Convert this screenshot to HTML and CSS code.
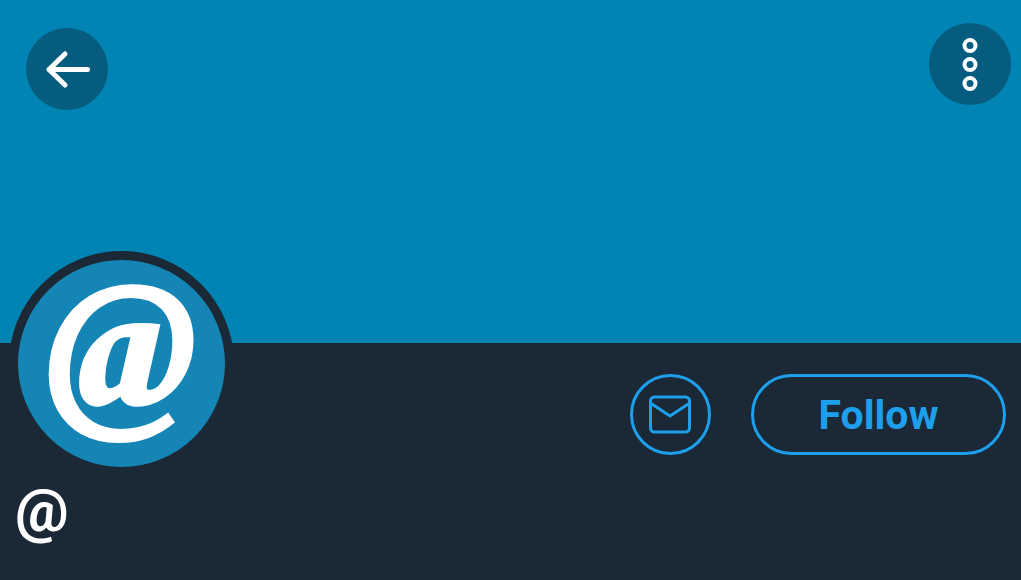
FILE: index.html
```
<!DOCTYPE html>
<html lang="en">
<head>
  <meta charset="UTF-8" />
  <meta name="viewport" content="width=device-width, initial-scale=1.0"/>
  <title>@</title>
  <link rel="stylesheet" href="styles.css">
</head>
<body>
  <header class="banner">
    <button class="round-btn back" type="button" aria-label="Back">
      <svg width="82" height="82" viewBox="0 0 82 82" fill="none" stroke="#fff" stroke-width="5" stroke-linecap="round" stroke-linejoin="round">
        <path d="M61.500 41.500H23M39 26L23 41.500L39 57"/>
      </svg>
    </button>
    <button class="round-btn" type="button" aria-label="More options">
      <svg width="82" height="82" viewBox="0 0 82 82" fill="none" stroke="#fff" stroke-width="4">
        <circle cx="41" cy="22.500" r="5.500"/>
        <circle cx="41" cy="41.500" r="5.500"/>
        <circle cx="41" cy="60.500" r="5.500"/>
      </svg>
    </button>
  </header>

  <main class="profile">
    <div class="profile-top">
      <div class="avatar"><span>@</span></div>
      <div class="actions">
        <button class="outline-btn message" type="button" aria-label="Message">
          <svg width="44" height="40" viewBox="0 0 44 40" fill="none" stroke="currentColor" stroke-width="3" stroke-linejoin="round">
            <rect x="1.500" y="2" width="39" height="35" rx="4"/>
            <path d="M2 8.500L21 21L40 8.500"/>
          </svg>
        </button>
        <button class="outline-btn follow" type="button">Follow</button>
      </div>
    </div>
    <h1 class="name">@</h1>
  </main>
</body>
</html>
```
FILE: styles.css
```
* {
  margin: 0;
  padding: 0;
  box-sizing: border-box;
}

body {
  min-height: 100vh;
  font-family: Roboto, sans-serif;
  background-color: #1b2836;
  color: #fff;
}

button {
  cursor: pointer;
}

.banner {
  display: flex;
  justify-content: space-between;
  align-items: flex-start;
  height: 343px;
  padding: 23px 10px 0 26px;
  background-color: #0084b4;
}

.round-btn {
  width: 82px;
  height: 82px;
  border: none;
  border-radius: 50%;
  background-color: #055c7f;
}

.round-btn svg {
  display: block;
}

.back {
  margin-top: 5px;
}

.profile-top {
  display: flex;
  justify-content: space-between;
  align-items: flex-start;
  padding: 0 15px 0 9px;
}

/* pulled up so it overlaps the banner */
.avatar {
  display: flex;
  justify-content: center;
  align-items: center;
  width: 225px;
  height: 225px;
  margin-top: -92px;
  padding-bottom: 34px;
  border: 9px solid #1b2836;
  border-radius: 50%;
  background-color: #1485b5;
  font-family: "Liberation Serif", serif;
  font-size: 180px;
  font-weight: bold;
  font-style: italic;
  line-height: 200px;
  -webkit-text-stroke: 4px #fff;
}

.actions {
  display: flex;
  gap: 40px;
  padding-top: 31px;
}

.outline-btn {
  display: flex;
  justify-content: center;
  align-items: center;
  height: 81px;
  border: 3px solid #1d9fec;
  border-radius: 41px;
  background: none;
  color: #1d9fec;
}

.message {
  width: 81px;
}

.follow {
  width: 255px;
  font-family: inherit;
  font-size: 41px;
  font-weight: bold;
}

.name {
  padding: 0 15px;
  font-size: 60px;
  font-weight: bold;
  line-height: 70px;
}
```
